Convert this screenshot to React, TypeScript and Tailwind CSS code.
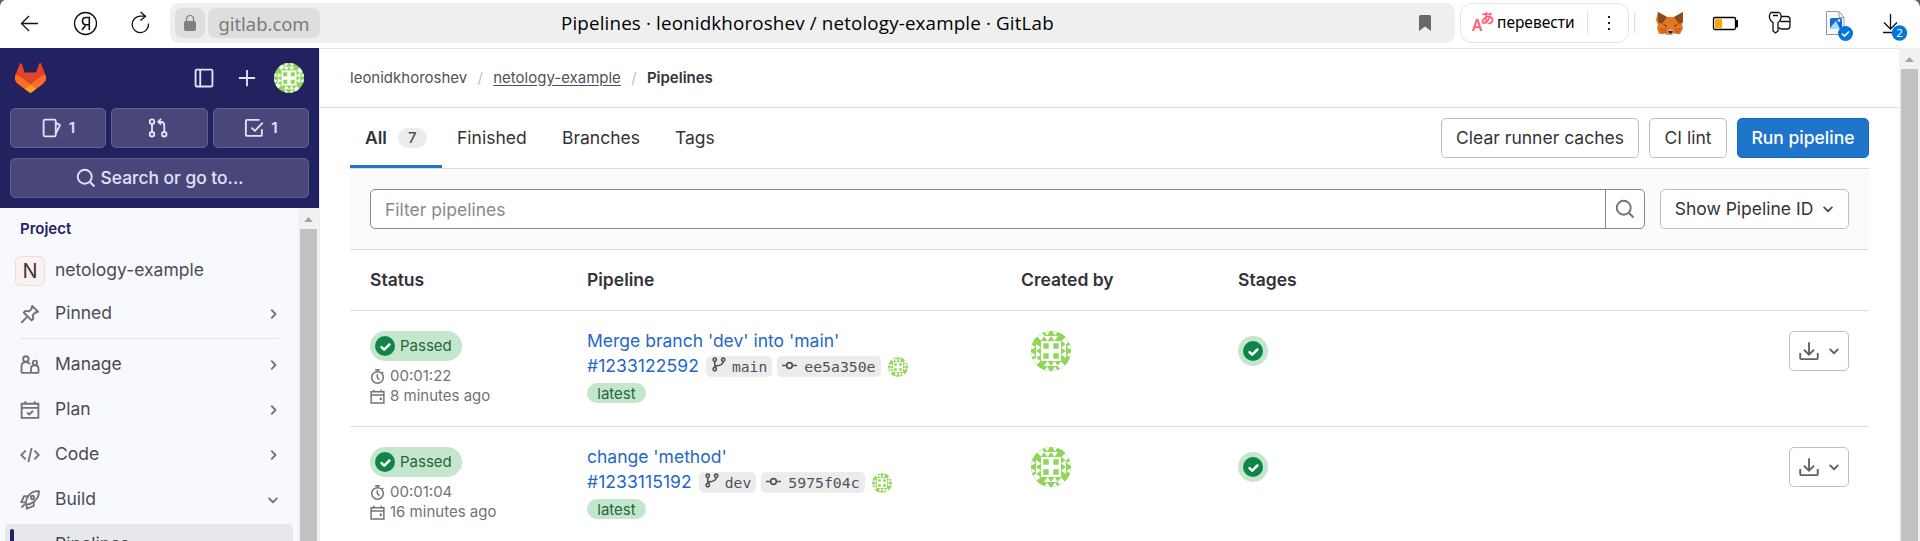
import type { ReactNode } from 'react';

type IconProps = { children: ReactNode; className?: string; w?: number };

function Icon({ children, className = 'size-5', w = 1.5 }: IconProps) {
  return (
    <svg viewBox="0 0 16 16" className={`shrink-0 ${className}`} fill="none" stroke="currentColor" strokeWidth={w}>
      {children}
    </svg>
  );
}

const ChevronRight = () => (
  <Icon>
    <path d="M7 4.900 10 8l-3 3.100" strokeLinecap="round" strokeLinejoin="round" />
  </Icon>
);
const ChevronDown = ({ className = 'size-5' }: { className?: string }) => (
  <Icon className={className}>
    <path d="M4.900 6.700 8 9.800l3.100-3.100" strokeLinecap="round" strokeLinejoin="round" />
  </Icon>
);
const SearchIcon = () => (
  <Icon>
    <circle cx="7" cy="7" r="5.6" />
    <path d="m11.200 11.200 3.600 3.600" />
  </Icon>
);

function Identicon({ className }: { className: string }) {
  return (
    <svg viewBox="0 0 40 40" className={`shrink-0 rounded-full ${className}`}>
      <rect width="40" height="40" fill="#8fd857" />
      {[0, 90, 180, 270].map((r) => (
        <g key={r} transform={`rotate(${r} 20 20)`} fill="#fff">
          <path d="M10 .5 13.500 5 10 9.500 5.500 5zM13 0h6l-3 4.500zM21 0h6l-3 4.500zM13 5h7l-3.500 5zM20 5h7l-3.500 5z" />
        </g>
      ))}
      <rect x="10" y="10" width="20" height="20" fill="#fff" />
      <path d="M12.300 12.300h5.400v5.400h-5.400zM22.300 12.300h5.400v5.400h-5.400zM12.300 22.300h5.400v5.400h-5.400zM22.300 22.300h5.400v5.400h-5.400z" fill="#8fd857" />
      <circle cx="20" cy="20" r="19.5" fill="none" stroke="#000" strokeOpacity="0.08" />
    </svg>
  );
}

function Tanuki() {
  return (
    <svg viewBox="0 0 25 24" className="h-[30px] w-[31px]">
      <path fill="#E24329" d="m24.507 9.5-.034-.09L21.082.562a.896.896 0 0 0-1.694.091l-2.29 7.01H7.825L5.535.653a.898.898 0 0 0-1.694-.09L.451 9.411.416 9.5a6.297 6.297 0 0 0 2.09 7.278l.012.01.03.022 5.16 3.867 2.56 1.935 1.554 1.176a1.051 1.051 0 0 0 1.268 0l1.555-1.176 2.56-1.935 5.197-3.89.014-.01A6.297 6.297 0 0 0 24.507 9.5Z" />
      <path fill="#FC6D26" d="m24.507 9.5-.034-.09a11.44 11.44 0 0 0-4.56 2.051l-7.447 5.632 4.742 3.584 5.197-3.89.014-.01A6.297 6.297 0 0 0 24.507 9.5Z" />
      <path fill="#FCA326" d="m7.707 20.677 2.56 1.935 1.555 1.176a1.051 1.051 0 0 0 1.268 0l1.555-1.176 2.56-1.935-4.743-3.584-4.755 3.584Z" />
      <path fill="#FC6D26" d="M5.01 11.461a11.43 11.43 0 0 0-4.56-2.05L.416 9.5a6.297 6.297 0 0 0 2.09 7.278l.012.01.03.022 5.16 3.867 4.745-3.584-7.444-5.632Z" />
    </svg>
  );
}

function BrowserBar() {
  return (
    <header className="flex h-12 items-center bg-white font-['Noto_Sans','Open_Sans',sans-serif] text-black">
      <svg viewBox="0 0 170 48" className="h-12 w-[170px] shrink-0" fill="none" stroke="#111" strokeWidth="1.3">
        <path d="M0 0h5Q1 1 0 6z" fill="#5f6368" stroke="none" />
        <path d="M38 23.500H21.500M29 16l-7.500 7.500L29 31" />
        <circle cx="85.500" cy="23.500" r="11" />
        <path d="M89.300 30V17.500h-3.200c-2.300 0-3.600 1.400-3.600 3.500 0 2.200 1.400 3.700 3.800 3.700h3M86 24.700 82 30" strokeWidth="1.600" />
        <path d="M145.500 16.200h-5.300a8.200 8.200 0 1 0 8.300 7.300M140.500 12l5 4.200-5 4.300" />
      </svg>
      <div className="-mt-[2px] flex h-10 w-[1285px] shrink-0 items-center gap-[3px] rounded-[9px] bg-[#efefef] pl-[5px] pr-[24px]">
        <span className="flex h-[30px] w-[30px] items-center justify-center rounded-[7px] bg-[#dedede]">
          <svg viewBox="0 0 14 18" className="h-[18px] w-[14px]">
            <rect x="1" y="7" width="12" height="10" rx="2" fill="#808080" />
            <path d="M3.500 8V5a3.500 3.500 0 0 1 7 0v3" fill="none" stroke="#808080" strokeWidth="1.200" />
          </svg>
        </span>
        <span className="flex h-[30px] w-[112px] items-center justify-center rounded-[7px] bg-[#dedede] pt-px text-[18.4px] text-[#7b7b7b]">gitlab.com</span>
        <span className="ml-[238px] whitespace-nowrap font-['Open_Sans','Noto_Sans',sans-serif] text-[18.8px] tracking-[0.15px]">Pipelines · leonidkhoroshev / netology-example · GitLab</span>
        <svg viewBox="0 0 12 16" className="ml-auto h-4 w-3">
          <path d="M0 1.500Q0 0 1.500 0h9Q12 0 12 1.500V16l-6-4.500L0 16z" fill="#686868" />
        </svg>
      </div>
      <div className="-mt-[2px] ml-[5px] flex h-10 w-[169px] shrink-0 items-center rounded-xl border border-[#e3e3e3]">
        <span className="ml-[11px] flex w-[22px] items-start font-['Noto_Sans','Noto_Sans_CJK_JP',sans-serif] font-semibold leading-none text-[#ff6475]">
          <span className="mt-[5px] text-[15.5px]">A</span>
          <span className="-ml-[2px] -mt-[2px] text-[14px]">あ</span>
        </span>
        <span className="ml-[3px] w-[76px] whitespace-nowrap text-[15.5px]">перевести</span>
        <span className="ml-[14px] h-[22px] w-px bg-[#e0e0e0]" />
        <svg viewBox="0 0 4 16" className="ml-[19px] h-4 w-1" fill="#222">
          <path d="M1 1h2v2H1zM1 7h2v2H1zM1 13h2v2H1z" />
        </svg>
      </div>
      <svg viewBox="1629 0 291 48" className="h-12 w-[291px] shrink-0" fill="none">
        <path d="M1634.500 13v20" stroke="#ddd" />
        <path d="m1658 12 9 5h7l9-5v10l-1 3 1 3-3 6-6-1-2 2h-5l-2-2-6 1-2-6 1-3-2-5z" fill="#e7771f" />
        <path d="m1658 12 9 5-5 7-4-2zM1683 12l-9 5 5 7 4-2z" fill="#8a4b20" />
        <path d="m1659 28 7 0 2 5-6 1zM1682 28l-7 0-2 5 6 1z" fill="#d86318" />
        <path d="m1667 31 3.500-2 3.500 2-1 3.500h-5z" fill="#c9b8aa" />
        <path d="M1668 31h5l-1 2.500h-3zM1663 24l3.500 1.500v1.500zM1678 24l-3.500 1.500v1.500z" fill="#2b2320" />
        <rect x="1713.500" y="17.500" width="22" height="12" rx="1.500" stroke="#000" strokeWidth="1.300" />
        <path d="M1736 20.500h1.500V27h-1.500z" fill="#000" stroke="#000" />
        <path d="M1715 19h7v9h-7z" fill="#ffa500" />
        <path d="M1771 12.500h8q2.500 1 2 5-.5 4-3 5V31l-2.500 2-2.500-2v-8.500q-3-1.500-3.500-5t1.500-5zM1773 15.500h5M1781.500 16.500h5.500q3 0 3 3v6.500q0 3-3 3h-5q-2.500 0-3-1.500M1780.500 21.500h9.500" stroke="#111" strokeWidth="1.300" />
        <path d="M1826.500 11.500h12.500l5 6V34.500h-17.500zM1839 11.500v6h5" fill="#fafafa" stroke="#999" />
        <rect x="1830" y="18" width="12" height="11" rx="1.500" fill="#1769d2" />
        <path d="m1830 28 6-7 4 8h-9z" fill="#a9dcff" />
        <circle cx="1839" cy="20.500" r="1.300" fill="#fff" />
        <circle cx="1845.500" cy="33.500" r="7.500" fill="#0078d7" />
        <path d="m1842 33.500 2.500 2.500 4.500-4.500" stroke="#fff" strokeWidth="1.600" />
        <path d="M1890.500 14v14.500M1884 22.500l6.500 6.500 6.500-6.500M1883 32.500h9" stroke="#111" strokeWidth="1.300" />
        <circle cx="1899.500" cy="33" r="7.700" fill="#0078d7" />
        <text x="1899.500" y="37.300" textAnchor="middle" fontSize="11.500" fill="#fff" fontFamily="Noto Sans, sans-serif">2</text>
        <path d="M1914 0h6v7q-1-6-6-7z" fill="#5f6368" />
      </svg>
    </header>
  );
}

function CounterButton({ children, className }: { children: ReactNode; className: string }) {
  return (
    <div className={`flex h-10 items-center justify-center gap-[7px] rounded-[5px] border border-[#626190] bg-[#494779] text-[15px] font-semibold ${className}`}>
      {children}
    </div>
  );
}

function NavItem({ icon, label, open }: { icon: ReactNode; label: string; open?: boolean }) {
  return (
    <div className="flex h-[45px] items-center pl-5 pr-[15px]">
      <span className="flex w-[35px] text-[#737278]">{icon}</span>
      <span className="flex-1">{label}</span>
      <span className="text-[#737278]">{open ? <ChevronDown /> : <ChevronRight />}</span>
    </div>
  );
}

function Scrollbar() {
  return (
    <div className="flex w-[21px] shrink-0 flex-col items-center bg-[#f1f1f1]">
      <svg viewBox="0 0 9 5" className="mb-[7px] mt-[9px] h-[5px] w-[9px]" fill="#a3a3a3">
        <path d="M4.500 0 9 5H0z" />
      </svg>
      <div className="w-[17px] flex-1 bg-[#c1c1c1]" />
    </div>
  );
}

function Sidebar() {
  return (
    <aside className="flex w-80 shrink-0 flex-col border-r border-[#ececef] bg-[#f8f9ff]">
      <div className="h-40 bg-[#222261] px-[10px] text-[#e1e1fa]">
        <div className="flex h-[60px] items-center px-[5px]">
          <Tanuki />
          <Icon className="ml-auto size-5">
            <rect x="1.250" y="1.250" width="13.500" height="13.500" rx="1" />
            <path d="M5 1.500v13" />
          </Icon>
          <Icon className="ml-[23px] size-5">
            <path d="M8 1.500v13M1.500 8h13" />
          </Icon>
          <Identicon className="ml-[17px] size-[30px]" />
        </div>
        <div className="flex justify-between">
          <CounterButton className="w-[96px] pl-px">
            <Icon>
              <path d="M11 3.500V12M1.300 2.500q0-1.200 1.200-1.200h7.300q1.200 0 1.200 1.200v11q0 1.200-1.200 1.200H2.500q-1.200 0-1.200-1.200zM11 3.700l3.400 2L11 12.500" strokeLinejoin="round" />
            </Icon>
            1
          </CounterButton>
          <CounterButton className="w-[97px] pr-[3px]">
            <Icon>
              <circle cx="3.200" cy="2.900" r="1.800" />
              <circle cx="3.200" cy="13" r="1.800" />
              <circle cx="13" cy="13" r="1.800" />
              <path d="M3.200 4.700v6.500M13 11.200V6q0-3-3-3H8.500M10.500.7 8.200 3l2.300 2.300" />
            </Icon>
          </CounterButton>
          <CounterButton className="w-[96px]">
            <Icon>
              <path d="M14.300 9v4.300q0 1-1 1H2.500q-1 0-1-1V2.500q0-1 1-1h10M6 7.700l2.700 2.600L15 3.700" strokeLinejoin="round" />
            </Icon>
            1
          </CounterButton>
        </div>
        <div className="mt-[10px] flex h-10 items-center justify-center gap-[5px] rounded-[5px] border border-[#626190] bg-[#494779] text-[17.4px] font-medium">
          <SearchIcon />
          Search or go to...
        </div>
      </div>
      <div className="flex min-h-0 flex-1">
        <nav className="flex w-[298px] shrink-0 flex-col overflow-hidden text-[17.5px] text-[#4c4b51]">
          <h2 className="pl-5 pt-[9px] text-[15px] font-semibold leading-6 text-[#222261]">Project</h2>
          <div className="mt-[7px] flex h-[45px] shrink-0 items-center gap-[10px] pl-[15px]">
            <span className="flex size-[30px] items-center justify-center rounded-[5px] border border-[#eedfdf] bg-[#fcf1ef] text-xl text-[#3a383f]">N</span>
            netology-example
          </div>
          <div className="-mt-[2px] shrink-0">
            <NavItem
              label="Pinned"
              icon={
                <Icon>
                  <path d="m1 15 4.500-4.500M9.800 1.500l4.700 4.700-1.300.6-.7-.2-2.300 2.300.4 2.900-1.300 1.300-6.300-6.300 1.300-1.300 2.900.4 2.300-2.300-.2-.7z" strokeLinejoin="round" />
                </Icon>
              }
            />
          </div>
          <div className="ml-5 mr-5 mt-[2px] h-px shrink-0 bg-[#e2e2e8]" />
          <div className="mt-[3px] shrink-0">
            <NavItem
              label="Manage"
              icon={
                <Icon>
                  <circle cx="4.700" cy="3.200" r="2.200" />
                  <circle cx="12" cy="6.200" r="1.700" />
                  <path d="M8.300 14.300H2.200q-1 0-1-1V9q0-3.300 3.500-3.300 2.500 0 3.300 1.800M8.800 13.500V11q0-2.800 3-2.800t3 2.800v2.500q0 .8-.8.800H9.600q-.8 0-.8-.8z" />
                </Icon>
              }
            />
            <NavItem
              label="Plan"
              icon={
                <Icon>
                  <path d="M1.300 3h13.400v11.300H1.300zM1.300 6.300h13.400M4.300 1v2M11.700 1v2M5.700 10l1.700 1.600 3-3" />
                </Icon>
              }
            />
            <NavItem
              label="Code"
              icon={
                <Icon>
                  <path d="M4.500 4.500 1 8l3.500 3.500M11.500 4.500 15 8l-3.500 3.500M9.300 2.300 6.700 13.700" />
                </Icon>
              }
            />
            <NavItem
              open
              label="Build"
              icon={
                <Icon>
                  <path d="M15.200.9Q9.500.6 6.700 4.800 4.300 8.200 4.700 11.300q3 .8 6.200-1.900Q15.300 6 15.200.9zM6.400 5H3.200L1 9.700l3.700.3M11 9.500v3.200L5.500 15l-.3-3.700M3.800 11.500 1.200 14" strokeLinejoin="round" />
                  <circle cx="10" cy="5.900" r="1.300" />
                </Icon>
              }
            />
          </div>
          <div className="ml-[5px] mt-[2px] flex h-10 w-[288px] shrink-0 items-center rounded-[5px] bg-[#e7e8ec] pl-[5px]">
            <span className="h-[30px] w-1 rounded bg-[#222261]" />
            <span className="ml-[41px]">Pipelines</span>
          </div>
        </nav>
        <Scrollbar />
      </div>
    </aside>
  );
}

const Check = ({ className = 'size-5' }: { className?: string }) => (
  <svg viewBox="0 0 20 20" className={`shrink-0 ${className}`} fill="none">
    <circle cx="10" cy="10" r="10" fill="#108548" />
    <path d="m6.500 11.200 2.700 2.500 5.200-5.200" stroke="#fff" strokeWidth="2.500" strokeLinecap="round" strokeLinejoin="round" />
  </svg>
);

type Pipeline = { title: string; id: string; branch: string; sha: string; duration: string; ago: string };

const pipelines: Pipeline[] = [
  { title: "Merge branch 'dev' into 'main'", id: '#1233122592', branch: 'main', sha: 'ee5a350e', duration: '00:01:22', ago: '8 minutes ago' },
  { title: "change 'method'", id: '#1233115192', branch: 'dev', sha: '5975f04c', duration: '00:01:04', ago: '16 minutes ago' },
];

function PipelineRow({ p }: { p: Pipeline }) {
  return (
    <div className="flex h-[116px] items-start border-b border-[#dcdcde] px-5 pt-5">
      <div className="w-[217px] text-[15px] leading-5 text-[#737278]">
        <span className="flex h-[30px] w-[92px] items-center gap-[5px] rounded-full bg-[#c3e6cd] pl-[5px] text-[#24663b]">
          <Check />
          Passed
        </span>
        <div className="mt-[5px] flex items-center gap-[5px]">
          <Icon className="size-[15px]" w={1.6}>
            <circle cx="8" cy="9" r="6.200" />
            <path d="M5.500.9h5M8 1v2M13 3.200l1.200 1.200M7.800 5.500V9l2.200 2.500" />
          </Icon>
          {p.duration}
        </div>
        <div className="flex items-center gap-[5px]">
          <Icon className="size-[15px]" w={1.6}>
            <path d="M1.200 3h13.600v12H1.200zM1.200 6.500h13.600M4 .8V3M12 .8V3" />
            <circle cx="11.500" cy="10.500" r=".6" />
          </Icon>
          {p.ago}
        </div>
      </div>
      <div className="w-[434px] text-[17.5px] leading-[25px] text-[#1f68c8]">
        <div className="-mt-[3px] h-[25px]">{p.title}</div>
        <div className="flex h-[25px] items-center">
          <span className="tracking-[0.07px]">{p.id}</span>
          <span className="ml-[7px] mt-px flex h-[21px] items-center gap-[6px] rounded-[5px] bg-[#ececef] px-[5px] font-['DejaVu_Sans_Mono',monospace] text-[14.7px] text-[#535158]">
            <Icon className="-mt-[3px] size-[15px]" w={1.7}>
              <circle cx="4" cy="3" r="1.800" />
              <circle cx="4" cy="13" r="1.800" />
              <circle cx="13" cy="3" r="1.800" />
              <path d="M4 4.800v6.400M4 9.500h2Q12.500 9 13 4.800" />
            </Icon>
            {p.branch}
          </span>
          <span className="ml-[5px] mt-px flex h-[21px] items-center gap-[7px] rounded-[5px] bg-[#ececef] px-[5px] font-['DejaVu_Sans_Mono',monospace] text-[14.8px] text-[#535158]">
            <Icon className="-mt-[2px] size-[15px]" w={1.8}>
              <circle cx="8" cy="8" r="3" />
              <path d="M0 8h5M11 8h5" />
            </Icon>
            {p.sha}
          </span>
          <Identicon className="ml-[7px] mt-[2px] size-5" />
        </div>
        <span className="mt-[5px] flex h-5 w-[59px] items-center justify-center rounded-full bg-[#c3e6cd] text-[15px] text-[#24663b]">latest</span>
      </div>
      <div className="w-[217px] pl-[10px]">
        <Identicon className="size-10" />
      </div>
      <div className="mt-[5px] flex size-[30px] items-center justify-center rounded-full bg-[#c3e6cd]">
        <Check />
      </div>
      <div className="ml-auto flex h-10 w-[60px] items-center gap-[5px] rounded-[5px] border border-[#bfbfc3] pl-[9px] text-[#626168]">
        <Icon>
          <path d="M8 1v9.500M4 7l4 4 4-4M1 9.500v4q0 1 1 1h12q1 0 1-1v-4" />
        </Icon>
        <ChevronDown />
      </div>
    </div>
  );
}

function Main() {
  const button = 'flex h-10 items-center justify-center whitespace-nowrap rounded-[5px] border';
  return (
    <main className="flex min-w-0 flex-1 flex-col bg-white text-[17.5px] text-[#333238]">
      <nav className="flex h-[60px] shrink-0 items-center border-b border-t border-b-[#dcdcde] border-t-[#e3e3e5] pl-[30px] text-[15px] text-[#535158]">
        <span>leonidkhoroshev</span>
        <span className="w-[26px] text-center text-[#bfbfc3]">/</span>
        <span className="underline underline-offset-2">netology-example</span>
        <span className="w-[26px] text-center text-[#bfbfc3]">/</span>
        <span className="font-semibold text-[#333238]">Pipelines</span>
      </nav>
      <div className="ml-[30px] w-[1519px]">
        <div className="flex h-[61px] items-start border-b border-[#dcdcde]">
          <div className="flex h-[60px] w-[92px] items-center border-b-[3px] border-[#1f75cb] pl-[15px] pt-[3px] font-semibold">
            All
            <span className="ml-[11px] flex h-5 w-[29px] items-center justify-center rounded-full bg-[#ececef] text-[15px] font-medium text-[#535158]">7</span>
          </div>
          <div className="flex h-[60px] items-center pl-[15px]">
            <span className="w-[105px]">Finished</span>
            <span className="w-[113px]">Branches</span>
            <span>Tags</span>
          </div>
          <div className="ml-auto mt-[10px] flex gap-[10px]">
            <span className={`${button} w-[198px] border-[#bfbfc3]`}>Clear runner caches</span>
            <span className={`${button} w-[78px] border-[#bfbfc3]`}>CI lint</span>
            <span className={`${button} w-[132px] border-[#1068bf] bg-[#1f75cb] font-medium text-white`}>Run pipeline</span>
          </div>
        </div>
        <div className="flex h-[81px] items-center border-b border-[#dcdcde] bg-[#fbfafd] px-5">
          <div className="flex h-10 w-[1275px] items-center rounded-[5px] border border-[#89888d] bg-white">
            <span className="flex-1 pl-[14px] pt-[2px] text-[#89888d]">Filter pipelines</span>
            <span className="flex h-full w-[39px] items-center justify-center border-l border-[#89888d] text-[#737278]">
              <SearchIcon />
            </span>
          </div>
          <span className={`${button} ml-[15px] w-[189px] gap-[5px] border-[#bfbfc3] bg-white pl-1`}>
            Show Pipeline ID
            <ChevronDown className="size-5 text-[#535158]" />
          </span>
        </div>
        <div className="flex h-[61px] items-center border-b border-[#dcdcde] px-5 font-semibold">
          <span className="w-[217px]">Status</span>
          <span className="w-[434px]">Pipeline</span>
          <span className="w-[217px]">Created by</span>
          <span>Stages</span>
        </div>
        {pipelines.map((p) => (
          <PipelineRow key={p.id} p={p} />
        ))}
      </div>
    </main>
  );
}

export default function App() {
  return (
    <div className="flex h-[541px] w-[1920px] flex-col overflow-hidden bg-white font-['Inter',sans-serif]">
      <BrowserBar />
      <div className="flex h-[493px]">
        <Sidebar />
        <Main />
        <Scrollbar />
      </div>
    </div>
  );
}
